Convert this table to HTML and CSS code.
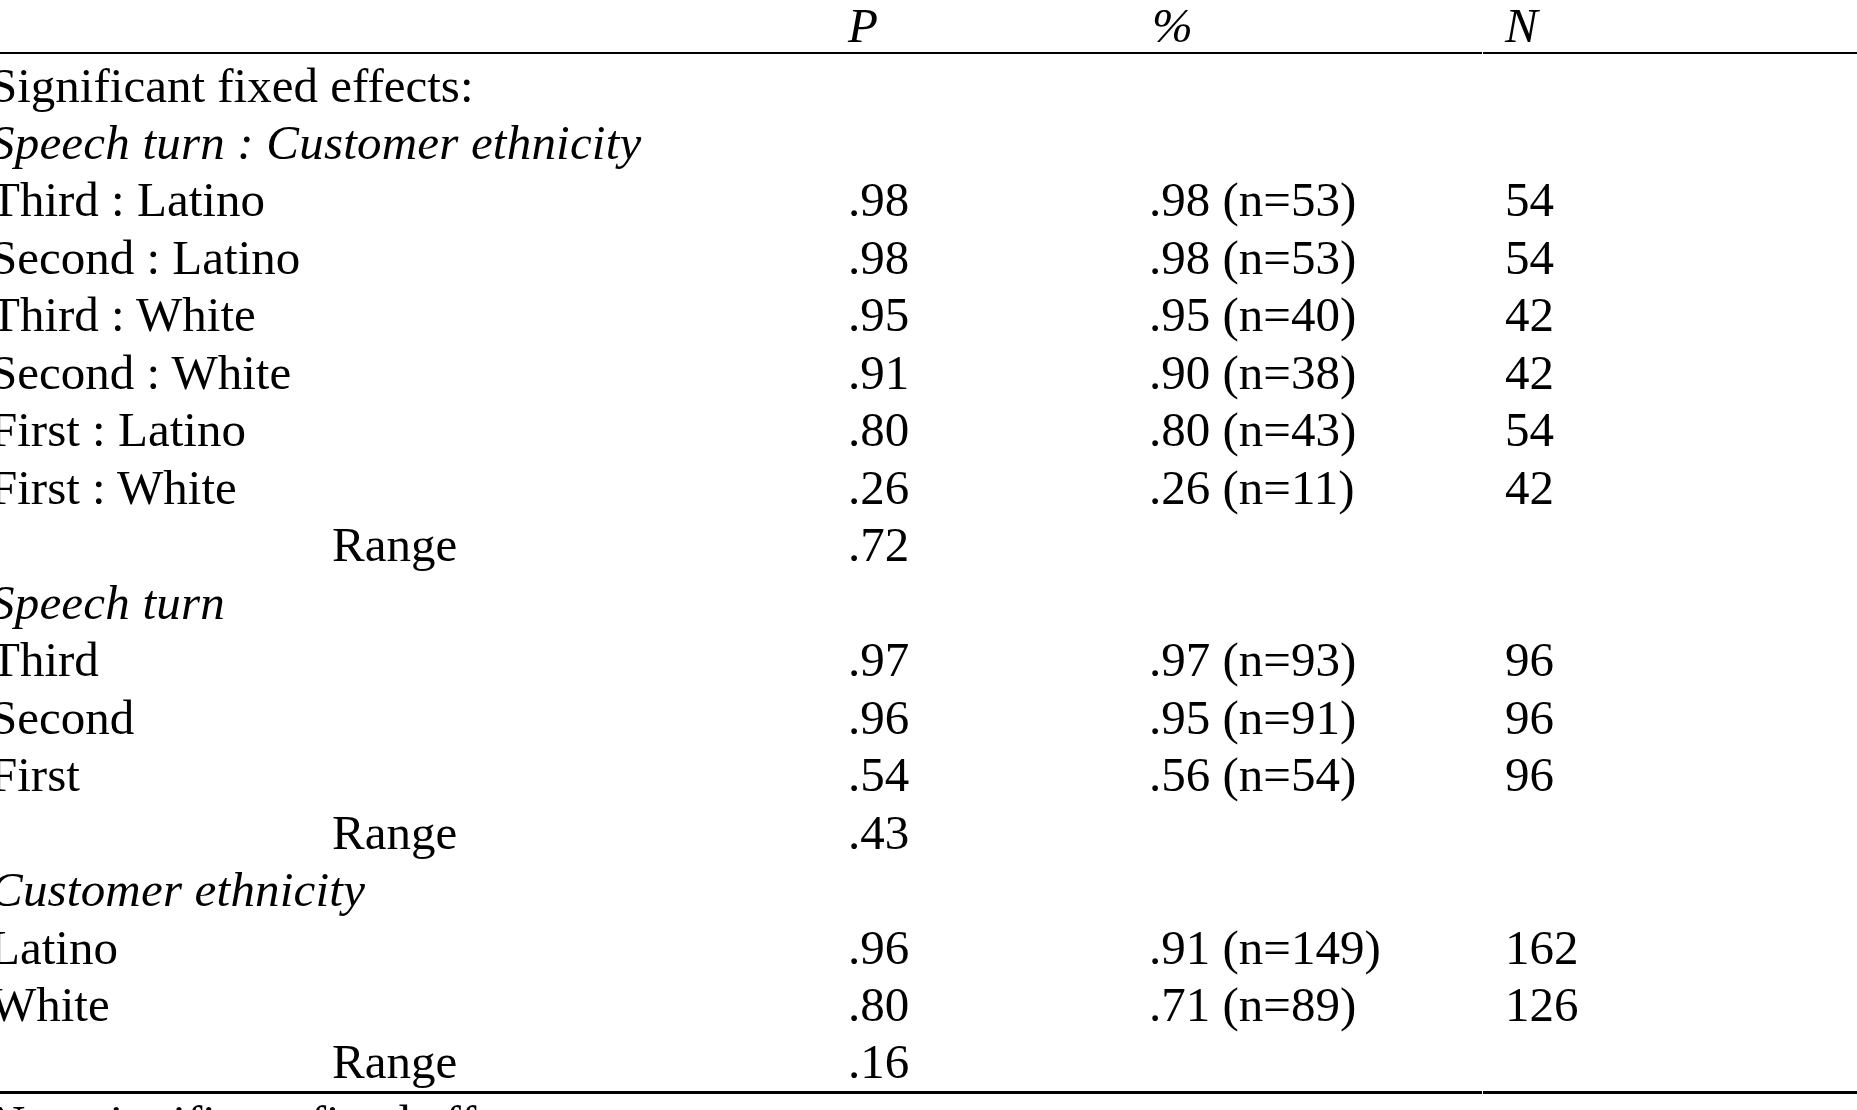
FILE: index.html
```html
<!DOCTYPE html>
<html lang="en">
<head>
<meta charset="utf-8">
<title>Fixed effects table</title>
<link rel="stylesheet" href="styles.css">
</head>
<body>
<div class="table">
  <div class="row head">
    <div class="cell"></div>
    <div class="cell it">P</div>
    <div class="cell it">%</div>
    <div class="cell n it">N</div>
  </div>
  <div class="row first"><div class="cell">Significant fixed effects:</div><div class="cell"></div><div class="cell"></div><div class="cell n"></div></div>
  <div class="row"><div class="cell it">Speech turn : Customer ethnicity</div><div class="cell"></div><div class="cell"></div><div class="cell n"></div></div>
  <div class="row"><div class="cell">Third : Latino</div><div class="cell">.98</div><div class="cell pc">.98 (n=53)</div><div class="cell n">54</div></div>
  <div class="row"><div class="cell">Second : Latino</div><div class="cell">.98</div><div class="cell pc">.98 (n=53)</div><div class="cell n">54</div></div>
  <div class="row"><div class="cell">Third : White</div><div class="cell">.95</div><div class="cell pc">.95 (n=40)</div><div class="cell n">42</div></div>
  <div class="row"><div class="cell">Second : White</div><div class="cell">.91</div><div class="cell pc">.90 (n=38)</div><div class="cell n">42</div></div>
  <div class="row"><div class="cell">First : Latino</div><div class="cell">.80</div><div class="cell pc">.80 (n=43)</div><div class="cell n">54</div></div>
  <div class="row"><div class="cell">First : White</div><div class="cell">.26</div><div class="cell pc">.26 (n=11)</div><div class="cell n">42</div></div>
  <div class="row"><div class="cell range">Range</div><div class="cell">.72</div><div class="cell"></div><div class="cell n"></div></div>
  <div class="row"><div class="cell it">Speech turn</div><div class="cell"></div><div class="cell"></div><div class="cell n"></div></div>
  <div class="row"><div class="cell">Third</div><div class="cell">.97</div><div class="cell pc">.97 (n=93)</div><div class="cell n">96</div></div>
  <div class="row"><div class="cell">Second</div><div class="cell">.96</div><div class="cell pc">.95 (n=91)</div><div class="cell n">96</div></div>
  <div class="row"><div class="cell">First</div><div class="cell">.54</div><div class="cell pc">.56 (n=54)</div><div class="cell n">96</div></div>
  <div class="row"><div class="cell range">Range</div><div class="cell">.43</div><div class="cell"></div><div class="cell n"></div></div>
  <div class="row"><div class="cell it">Customer ethnicity</div><div class="cell"></div><div class="cell"></div><div class="cell n"></div></div>
  <div class="row"><div class="cell">Latino</div><div class="cell">.96</div><div class="cell pc">.91 (n=149)</div><div class="cell n">162</div></div>
  <div class="row"><div class="cell">White</div><div class="cell">.80</div><div class="cell pc">.71 (n=89)</div><div class="cell n">126</div></div>
  <div class="row last"><div class="cell range">Range</div><div class="cell">.16</div><div class="cell"></div><div class="cell n"></div></div>
  <div class="row"><div class="cell">Non-significant fixed effects:</div><div class="cell"></div><div class="cell"></div><div class="cell n"></div></div>
</div>
</body>
</html>
```
FILE: styles.css
```css
html, body {
  margin: 0;
  padding: 0;
  background: #ffffff;
  overflow: hidden;
}
body {
  width: 1857px;
  height: 1110px;
  font-family: "Liberation Serif", "Times New Roman", serif;
  font-size: 49px;
  color: #000000;
}
.table {
  margin-left: -10px;
  width: 1867px;
}
.row {
  display: grid;
  grid-template-columns: 858px 304px 330px 1fr;
  line-height: 57.47px;
  white-space: nowrap;
}
.row.head {
  line-height: 52px;
}
.row.first {
  margin-top: 2.5px;
}
.cell {
  min-width: 0;
}
.cell.pc {
  margin-left: -3px;
}
.cell.n {
  margin-left: 1px;
  padding-left: 22px;
}
.it {
  font-style: italic;
  letter-spacing: 0.2px;
}
.range {
  padding-left: 342px;
}
.head .cell {
  border-bottom: 2px solid #000000;
}
.last .cell {
  border-bottom: 3px solid #000000;
}
```
